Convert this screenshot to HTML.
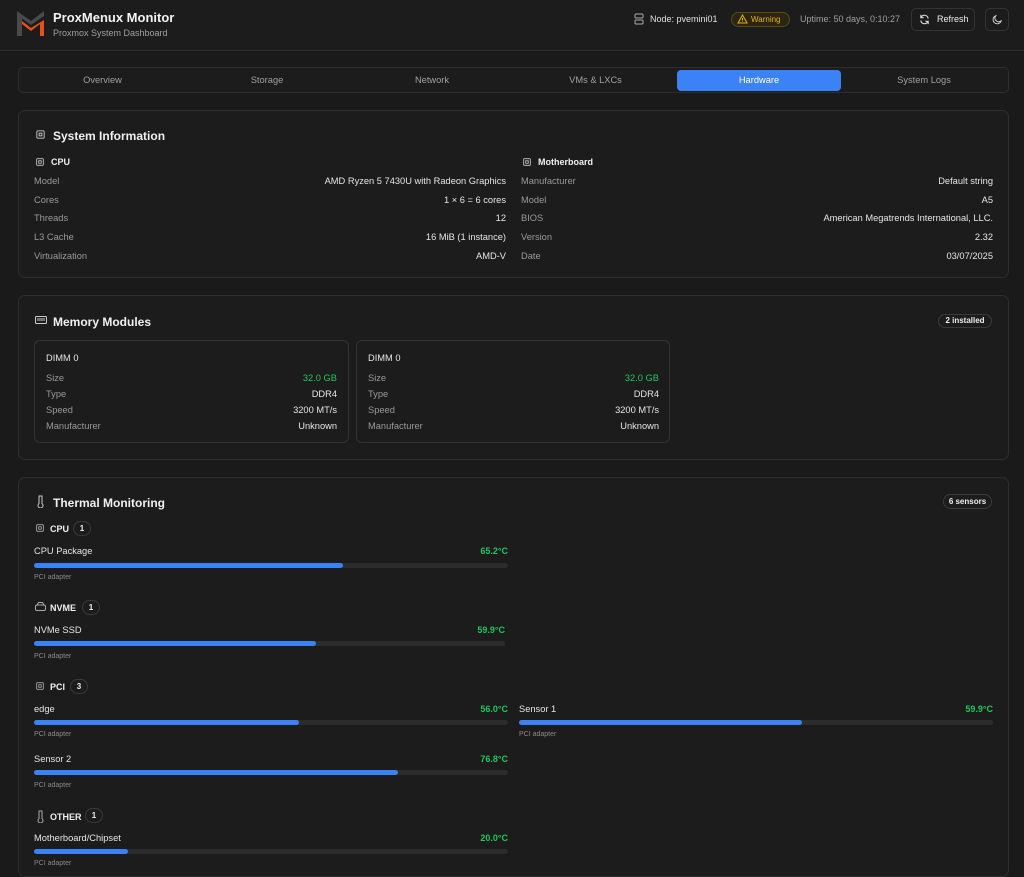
<!DOCTYPE html><html><head><meta charset="utf-8"><style>
*{box-sizing:border-box;margin:0;padding:0}
body{width:1024px;height:862px;overflow:hidden;background:#1a1a1a;font-family:"Liberation Sans",sans-serif;color:#e6e6e6;position:relative}
.a{position:absolute}
.hdr{left:0;top:0;width:1024px;height:51px;border-bottom:1px solid #2c2c2c;background:#1c1c1c}
.card{position:absolute;left:18px;width:991px;border:1px solid #2e2e2e;border-radius:7px;background:#1c1c1c}
.row{position:absolute;height:12px;display:flex;justify-content:space-between;font-size:9.3px}
.row span:first-child{color:#9a9a9a}
.g{color:#22c55e!important}
.h{font-size:12px;font-weight:bold;color:#f0f0f0}
.sh{font-size:9px;font-weight:bold;color:#f0f0f0}
.bar{position:absolute;height:5px;background:#2c2c2c;border-radius:3px}
.bar i{display:block;height:5px;background:#3b82f6;border-radius:3px}
.pill{position:absolute;border:1px solid #3a3a3a;border-radius:9px;font-size:8px;font-weight:bold;color:#eee;text-align:center}
.tab{position:absolute;top:70px;height:21px;line-height:21px;font-size:9.3px;color:#a0a0a0;text-align:center}
</style></head><body>
<div class="a hdr"></div>
<svg class="a" style="left:17px;top:10px" width="28" height="27" viewBox="0 0 28 27"><path d="M0 1 L14 11 L27 1 L27 6 L14 15 L5 8.5 L5 26 L0 26Z" fill="#4a4a4a"/><path d="M5 14 L14 21 L23 14 L23 26 L27 26 L27 10 L14 18 L5 11Z" fill="#e8501a"/></svg>
<div class="a" style="left:53px;top:10px;font-size:13px;font-weight:bold;color:#f2f2f2">ProxMenux Monitor</div>
<div class="a" style="left:53px;top:28px;font-size:9px;color:#a0a0a0">Proxmox System Dashboard</div>
<svg class="a" style="left:634px;top:13px" width="10" height="12"><rect x="1" y="1" width="8" height="4" rx="1" fill="none" stroke="#aaa"/><rect x="1" y="7" width="8" height="4" rx="1" fill="none" stroke="#aaa"/></svg>
<div class="a" style="left:650px;top:14px;font-size:9px;color:#e0e0e0">Node: pvemini01</div>
<div class="a" style="left:731px;top:12px;width:59px;height:15px;border:1px solid #5a4a14;background:#2b2614;border-radius:8px;font-size:8px;color:#eab308;line-height:13px;padding-left:19px">Warning</div>
<svg class="a" style="left:737px;top:14px" width="11" height="10"><path d="M5.5 1 L10 9 L1 9Z" fill="none" stroke="#eab308"/><path d="M5.5 4v2.5M5.5 7.5v.5" stroke="#eab308"/></svg>
<div class="a" style="left:800px;top:14px;font-size:9px;color:#a0a0a0">Uptime: 50 days, 0:10:27</div>
<div class="a" style="left:911px;top:8px;width:64px;height:23px;border:1px solid #333;border-radius:5px;font-size:9px;line-height:21px;padding-left:25px;color:#eee">Refresh</div>
<svg class="a" style="left:919px;top:14px" width="11" height="11" viewBox="0 0 12 12"><path d="M10 5A4 4 0 0 0 2.5 3.5M2 7A4 4 0 0 0 9.5 8.5" fill="none" stroke="#ddd" stroke-width="1.2"/><path d="M2 1v3h3M10 11V8H7" fill="none" stroke="#ddd" stroke-width="1.2"/></svg>
<div class="a" style="left:985px;top:8px;width:24px;height:23px;border:1px solid #333;border-radius:5px"></div>
<svg class="a" style="left:992px;top:14px" width="11" height="11" viewBox="0 0 12 12"><path d="M9 8A4 4 0 0 1 4 2 4.5 4.5 0 1 0 10 7.5Z" fill="none" stroke="#ddd"/></svg>

<div class="a" style="left:18px;top:67px;width:991px;height:26px;border:1px solid #2e2e2e;border-radius:5px;background:#1c1c1c"></div>
<div class="tab" style="left:21px;width:163px">Overview</div>
<div class="tab" style="left:185px;width:164px">Storage</div>
<div class="tab" style="left:350px;width:164px">Network</div>
<div class="tab" style="left:514px;width:163px">VMs &amp; LXCs</div>
<div class="tab" style="left:677px;width:164px;background:#3b82f6;color:#fff;border-radius:4px">Hardware</div>
<div class="tab" style="left:842px;width:164px">System Logs</div>

<div class="card" style="top:110px;height:168px"></div>
<svg class="a" style="left:35px;top:129px" width="11" height="11" viewBox="0 0 12 12"><rect x="2" y="2" width="8" height="8" rx="1" fill="none" stroke="#ccc"/><rect x="4.5" y="4.5" width="3" height="3" fill="none" stroke="#ccc"/></svg>
<div class="a h" style="left:53px;top:129px">System Information</div>
<svg class="a" style="left:35px;top:157px" width="10" height="10" viewBox="0 0 12 12"><rect x="2" y="2" width="8" height="8" rx="1" fill="none" stroke="#ccc"/><rect x="4.5" y="4.5" width="3" height="3" fill="none" stroke="#ccc"/></svg>
<div class="a sh" style="left:51px;top:157px">CPU</div>
<svg class="a" style="left:522px;top:157px" width="10" height="10" viewBox="0 0 12 12"><rect x="2" y="2" width="8" height="8" rx="1" fill="none" stroke="#ccc"/><rect x="4.5" y="4.5" width="3" height="3" fill="none" stroke="#ccc"/></svg>
<div class="a sh" style="left:538px;top:157px">Motherboard</div>
<div class="row" style="left:34px;width:472px;top:176px"><span>Model</span><span>AMD Ryzen 5 7430U with Radeon Graphics</span></div>
<div class="row" style="left:34px;width:472px;top:195px"><span>Cores</span><span>1 × 6 = 6 cores</span></div>
<div class="row" style="left:34px;width:472px;top:213px"><span>Threads</span><span>12</span></div>
<div class="row" style="left:34px;width:472px;top:232px"><span>L3 Cache</span><span>16 MiB (1 instance)</span></div>
<div class="row" style="left:34px;width:472px;top:251px"><span>Virtualization</span><span>AMD-V</span></div>
<div class="row" style="left:521px;width:472px;top:176px"><span>Manufacturer</span><span>Default string</span></div>
<div class="row" style="left:521px;width:472px;top:195px"><span>Model</span><span>A5</span></div>
<div class="row" style="left:521px;width:472px;top:213px"><span>BIOS</span><span>American Megatrends International, LLC.</span></div>
<div class="row" style="left:521px;width:472px;top:232px"><span>Version</span><span>2.32</span></div>
<div class="row" style="left:521px;width:472px;top:251px"><span>Date</span><span>03/07/2025</span></div>

<div class="card" style="top:295px;height:165px"></div>
<svg class="a" style="left:35px;top:316px" width="12" height="9"><rect x="0.5" y="0.5" width="11" height="7" rx="1" fill="none" stroke="#ccc"/><path d="M3 2v3M5 2v3M7 2v3M9 2v3" stroke="#ccc"/></svg>
<div class="a h" style="left:53px;top:315px">Memory Modules</div>
<div class="pill" style="left:938px;top:314px;width:54px;height:14px;line-height:12px">2 installed</div>
<div class="a" style="left:34px;top:340px;width:315px;height:103px;border:1px solid #333;border-radius:6px"></div>
<div class="a" style="left:356px;top:340px;width:314px;height:103px;border:1px solid #333;border-radius:6px"></div>
<div class="a" style="left:46px;top:353px;font-size:9.3px;color:#e6e6e6">DIMM 0</div>
<div class="row" style="left:46px;width:291px;top:373px"><span>Size</span><span class="g">32.0 GB</span></div>
<div class="row" style="left:46px;width:291px;top:389px"><span>Type</span><span>DDR4</span></div>
<div class="row" style="left:46px;width:291px;top:405px"><span>Speed</span><span>3200 MT/s</span></div>
<div class="row" style="left:46px;width:291px;top:421px"><span>Manufacturer</span><span>Unknown</span></div>
<div class="a" style="left:368px;top:353px;font-size:9.3px;color:#e6e6e6">DIMM 0</div>
<div class="row" style="left:368px;width:291px;top:373px"><span>Size</span><span class="g">32.0 GB</span></div>
<div class="row" style="left:368px;width:291px;top:389px"><span>Type</span><span>DDR4</span></div>
<div class="row" style="left:368px;width:291px;top:405px"><span>Speed</span><span>3200 MT/s</span></div>
<div class="row" style="left:368px;width:291px;top:421px"><span>Manufacturer</span><span>Unknown</span></div>

<div class="card" style="top:477px;height:400px"></div>
<svg class="a" style="left:37px;top:495px" width="7" height="13"><path d="M2 1h3v7.5a2.5 2.5 0 1 1-3 0Z" fill="none" stroke="#ccc"/></svg>
<div class="a h" style="left:53px;top:496px">Thermal Monitoring</div>
<div class="pill" style="left:943px;top:494px;width:49px;height:15px;line-height:13px">6 sensors</div>

<svg class="a" style="left:35px;top:523px" width="10" height="10" viewBox="0 0 12 12"><rect x="2" y="2" width="8" height="8" rx="1" fill="none" stroke="#aaa"/><rect x="4.5" y="4.5" width="3" height="3" fill="none" stroke="#aaa"/></svg>
<div class="a sh" style="left:50px;top:524px">CPU</div><div class="pill" style="left:73px;top:521px;width:18px;height:15px;line-height:13px">1</div>
<div class="a" style="left:34px;top:546px;font-size:9.3px">CPU Package</div><div class="a g" style="left:440px;width:68px;text-align:right;top:546px;font-size:9px;font-weight:bold">65.2°C</div>
<div class="bar" style="left:34px;top:563px;width:474px"><i style="width:309px"></i></div>
<div class="a" style="left:34px;top:574px;font-size:7px;color:#8a8a8a">PCI adapter</div>

<svg class="a" style="left:35px;top:602px" width="11" height="9"><rect x="0.5" y="3" width="10" height="5.5" rx="1.5" fill="none" stroke="#aaa"/><path d="M2 3L3.5 0.5h4L9 3" fill="none" stroke="#aaa"/></svg>
<div class="a sh" style="left:50px;top:603px">NVME</div><div class="pill" style="left:82px;top:600px;width:18px;height:15px;line-height:13px">1</div>
<div class="a" style="left:34px;top:625px;font-size:9.3px">NVMe SSD</div><div class="a g" style="left:437px;width:68px;text-align:right;top:625px;font-size:9px;font-weight:bold">59.9°C</div>
<div class="bar" style="left:34px;top:641px;width:471px"><i style="width:282px"></i></div>
<div class="a" style="left:34px;top:653px;font-size:7px;color:#8a8a8a">PCI adapter</div>

<svg class="a" style="left:35px;top:681px" width="10" height="10" viewBox="0 0 12 12"><rect x="2" y="2" width="8" height="8" rx="1" fill="none" stroke="#aaa"/><rect x="4.5" y="4.5" width="3" height="3" fill="none" stroke="#aaa"/></svg>
<div class="a sh" style="left:50px;top:682px">PCI</div><div class="pill" style="left:70px;top:679px;width:18px;height:15px;line-height:13px">3</div>
<div class="a" style="left:34px;top:704px;font-size:9.3px">edge</div><div class="a g" style="left:440px;width:68px;text-align:right;top:704px;font-size:9px;font-weight:bold">56.0°C</div>
<div class="bar" style="left:34px;top:720px;width:474px"><i style="width:265px"></i></div>
<div class="a" style="left:34px;top:731px;font-size:7px;color:#8a8a8a">PCI adapter</div>
<div class="a" style="left:519px;top:704px;font-size:9.3px">Sensor 1</div><div class="a g" style="left:925px;width:68px;text-align:right;top:704px;font-size:9px;font-weight:bold">59.9°C</div>
<div class="bar" style="left:519px;top:720px;width:474px"><i style="width:283px"></i></div>
<div class="a" style="left:519px;top:731px;font-size:7px;color:#8a8a8a">PCI adapter</div>
<div class="a" style="left:34px;top:754px;font-size:9.3px">Sensor 2</div><div class="a g" style="left:440px;width:68px;text-align:right;top:754px;font-size:9px;font-weight:bold">76.8°C</div>
<div class="bar" style="left:34px;top:770px;width:474px"><i style="width:364px"></i></div>
<div class="a" style="left:34px;top:782px;font-size:7px;color:#8a8a8a">PCI adapter</div>

<svg class="a" style="left:37px;top:810px" width="7" height="13"><path d="M2 1h3v7.5a2.5 2.5 0 1 1-3 0Z" fill="none" stroke="#aaa"/></svg>
<div class="a sh" style="left:50px;top:812px">OTHER</div><div class="pill" style="left:85px;top:808px;width:18px;height:15px;line-height:13px">1</div>
<div class="a" style="left:34px;top:833px;font-size:9.3px">Motherboard/Chipset</div><div class="a g" style="left:440px;width:68px;text-align:right;top:833px;font-size:9px;font-weight:bold">20.0°C</div>
<div class="bar" style="left:34px;top:849px;width:474px"><i style="width:94px"></i></div>
<div class="a" style="left:34px;top:860px;font-size:7px;color:#8a8a8a">PCI adapter</div>
</body></html>
